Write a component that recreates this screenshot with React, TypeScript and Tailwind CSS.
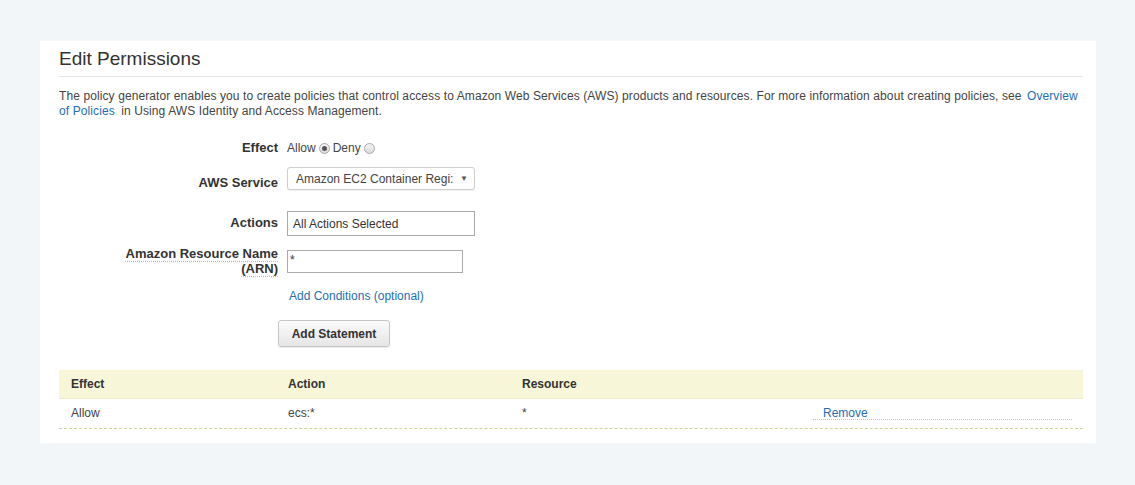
import React from "react";

const font = { fontFamily: '"Liberation Sans", Arial, sans-serif' };

function Radio({ checked }: { checked?: boolean }) {
  return (
    <span className="inline-flex items-center justify-center w-[11px] h-[11px] rounded-full border border-[#a9a9a9] bg-gradient-to-b from-[#f4f4f4] to-[#dcdcdc] mx-[3px]">
      {checked && <span className="w-[5px] h-[5px] rounded-full bg-[#555]" />}
    </span>
  );
}

export default function App() {
  return (
    <div className="min-h-[485px] w-full bg-[#f3f6f9] pt-[41px] pl-[40px]" style={font}>
      <div className="w-[1056px] h-[402px] bg-white pl-[19px] pr-[13px] pt-[6px] text-[#444]">
        <h1 className="text-[19px] leading-[24px] text-[#333]">Edit Permissions</h1>
        <div className="mt-[5px] border-t border-[#e4e4e4]" />
        <p className="mt-[12px] text-[12px] leading-[15px] tracking-[0.1px] text-[#444]">
          The policy generator enables you to create policies that control access to Amazon Web Services (AWS) products and resources. For more information about creating policies, see{" "}
          <a className="text-[#1f6db3] ml-[2px] mr-[3px]">Overview of Policies</a> in Using AWS Identity and Access Management.
        </p>

        {/* Effect */}
        <div className="mt-[21px] flex items-center h-[16px]">
          <div className="w-[219px] text-right text-[13px] font-bold text-[#333]">Effect</div>
          <div className="ml-[9px] flex items-center text-[12px] text-[#444]">
            <span>Allow</span>
            <Radio checked />
            <span>Deny</span>
            <Radio />
          </div>
        </div>

        {/* AWS Service */}
        <div className="mt-[11px] flex items-start">
          <div className="w-[219px] pt-[8px] text-right text-[13px] leading-[16px] font-bold text-[#333]">AWS Service</div>
          <div className="ml-[9px] w-[188px] h-[23px] rounded-[3px] border border-[#cfcfcf] bg-white shadow-[0_1px_1px_rgba(0,0,0,0.06)] flex items-center pl-[8px] pr-[6px] text-[12px] text-[#444]">
            <span className="flex-1 overflow-hidden whitespace-nowrap">Amazon EC2 Container Regi:</span>
            <span className="text-[8px] text-[#555] ml-[4px]">▼</span>
          </div>
        </div>

        {/* Actions */}
        <div className="mt-[20px] flex items-start">
          <div className="w-[219px] pt-[4px] text-right text-[13px] leading-[16px] font-bold text-[#333]">Actions</div>
          <div className="ml-[9px] w-[188px] h-[25px] border border-[#ababab] bg-white flex items-center pl-[5px] text-[12px] text-[#333]">
            All Actions Selected
          </div>
        </div>

        {/* ARN */}
        <div className="mt-[14px] flex items-start">
          <div className="w-[219px] -mt-[4px] text-right text-[13px] leading-[15px] font-bold text-[#333]">
            <span className="underline decoration-dotted decoration-[#bbb] underline-offset-[3px]">Amazon Resource Name</span>
            <br />
            <span className="underline decoration-dotted decoration-[#bbb] underline-offset-[3px]">(ARN)</span>
          </div>
          <div className="ml-[9px] w-[176px] h-[23px] border border-[#ababab] bg-white flex items-start pl-[2px] pt-[2px] text-[12px] leading-[14px] text-[#333]">
            *
          </div>
        </div>

        <div className="mt-[12px] pl-[230px] text-[12px] leading-[16px] text-[#1f6db3]">Add Conditions (optional)</div>

        <div className="mt-[16px] pl-[219px]">
          <button className="w-[112px] h-[27px] rounded-[3px] border border-[#c6c6c6] bg-gradient-to-b from-[#fbfbfb] to-[#e6e6e6] text-[12px] font-bold text-[#333] shadow-[0_1px_1px_rgba(0,0,0,0.08)]">
            Add Statement
          </button>
        </div>

        {/* Table */}
        <div className="mt-[23px] text-[12px]">
          <div className="flex h-[29px] items-center bg-[#f7f6d8] border-b border-[#eeecc6] font-bold text-[#333]">
            <div className="w-[217px] pl-[12px]">Effect</div>
            <div className="w-[234px] pl-[12px]">Action</div>
            <div className="w-[301px] pl-[12px]">Resource</div>
            <div className="flex-1" />
          </div>
          <div className="flex h-[30px] items-start border-b border-dashed border-[#d2d29a] text-[#444]">
            <div className="w-[217px] pl-[12px] pt-[5px]">Allow</div>
            <div className="w-[234px] pl-[12px] pt-[5px]">ecs:*</div>
            <div className="w-[301px] pl-[12px] pt-[5px]">*</div>
            <div className="flex-1 pl-[2px] pr-[11px]">
              <div className="pt-[5px] pl-[10px] h-[21px] border-b border-dotted border-[#c4c4c4] text-[#1f6db3]">Remove</div>
            </div>
          </div>
        </div>
      </div>
    </div>
  );
}
